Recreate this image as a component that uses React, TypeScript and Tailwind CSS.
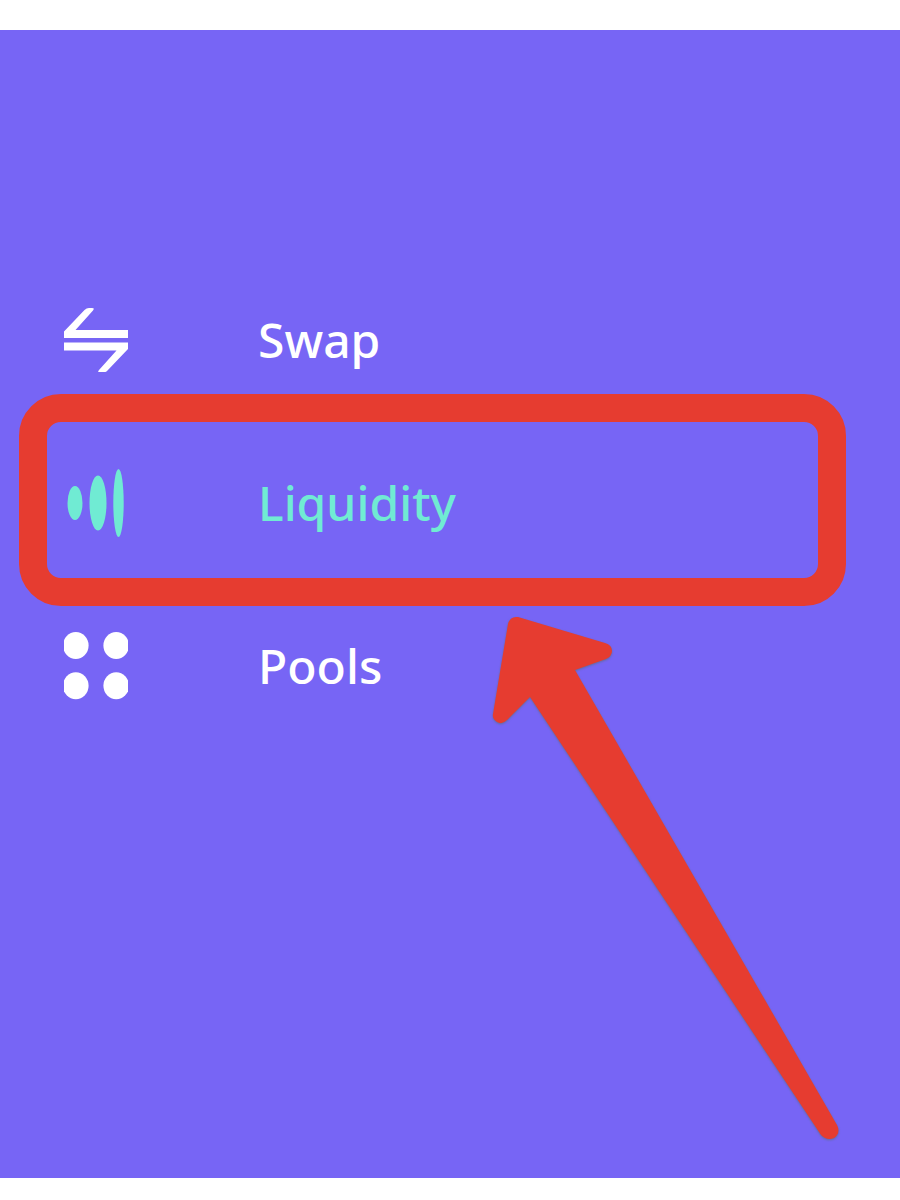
import type { ReactNode } from "react";

interface NavItem {
  label: string;
  href: string;
  icon: ReactNode;
  active?: boolean;
}

function SwapIcon() {
  return (
    <svg className="h-16 w-16 shrink-0" viewBox="0 0 64 64" fill="currentColor" aria-hidden="true">
      <path d="M0 30V23.5L20.5 2Q22.5 0 25 0H28Q31 0 29 2.4L11.5 22H64V30Z" />
      <path d="M0 34.5H64V41L43.5 62.5Q41.5 64.5 39 64.5H36Q33 64.5 35 62L52.5 42.5H0Z" />
    </svg>
  );
}

function LiquidityIcon() {
  return (
    <svg className="h-[68px] w-16 shrink-0" viewBox="0 0 64 68" fill="currentColor" aria-hidden="true">
      <ellipse cx="11" cy="34" rx="7.5" ry="17" />
      <ellipse cx="34" cy="34" rx="8.5" ry="27.5" />
      <ellipse cx="54.5" cy="34" rx="5.2" ry="34" />
    </svg>
  );
}

function PoolsIcon() {
  return (
    <svg className="h-[68px] w-16 shrink-0" viewBox="0 0 64 68" fill="currentColor" aria-hidden="true">
      <ellipse cx="11.8" cy="13.5" rx="12.8" ry="13.5" />
      <ellipse cx="52.2" cy="13.5" rx="12.8" ry="13.5" />
      <ellipse cx="11.8" cy="53.8" rx="12.8" ry="13.5" />
      <ellipse cx="52.2" cy="53.8" rx="12.8" ry="13.5" />
    </svg>
  );
}

function Arrow() {
  return (
    <svg
      className="pointer-events-none absolute top-[580px] left-[488px] h-[536px] w-[360px] overflow-visible text-[#e63c30]"
      viewBox="488 610 360 536"
      fill="currentColor"
      aria-hidden="true"
    >
      <path
        className="drop-shadow-[0px_1px_1px_rgba(90,110,110,0.7)]"
        d="M518 617L605 643Q612 645 612 651Q612 656 606 659L575 670L837 1125Q841 1133 834 1138Q827 1141 821 1135L530 697L507 720Q502 725 497 722Q492 719 493 714L508 624Q510 616 518 617Z"
      />
    </svg>
  );
}

const items: NavItem[] = [
  { label: "Swap", href: "#swap", icon: <SwapIcon /> },
  { label: "Liquidity", href: "#liquidity", icon: <LiquidityIcon />, active: true },
  { label: "Pools", href: "#pools", icon: <PoolsIcon /> },
];

export default function App() {
  return (
    <div className="min-h-screen bg-white pt-[30px] pb-[22px] font-['Noto_Sans',sans-serif]">
      <main className="relative min-h-[1148px] overflow-hidden bg-[#7765f5] pt-[228px]">
        <nav aria-label="Main">
          <ul>
            {items.map((item) => (
              <li key={item.label} className="relative">
                <a
                  href={item.href}
                  aria-current={item.active ? "page" : undefined}
                  className={`flex h-[163px] items-center gap-[130px] pl-16 text-5xl font-medium ${item.active ? "text-[#70ebd3]" : "text-white"}`}
                >
                  {item.icon}
                  <span>{item.label}</span>
                </a>
                {/* Highlight ring */}
                {item.active && (
                  <div className="pointer-events-none absolute -top-[27px] right-[54px] -bottom-[22px] left-[19px] rounded-[42px] border-[28px] border-[#e63c30]" />
                )}
              </li>
            ))}
          </ul>
        </nav>
        <Arrow />
      </main>
    </div>
  );
}
